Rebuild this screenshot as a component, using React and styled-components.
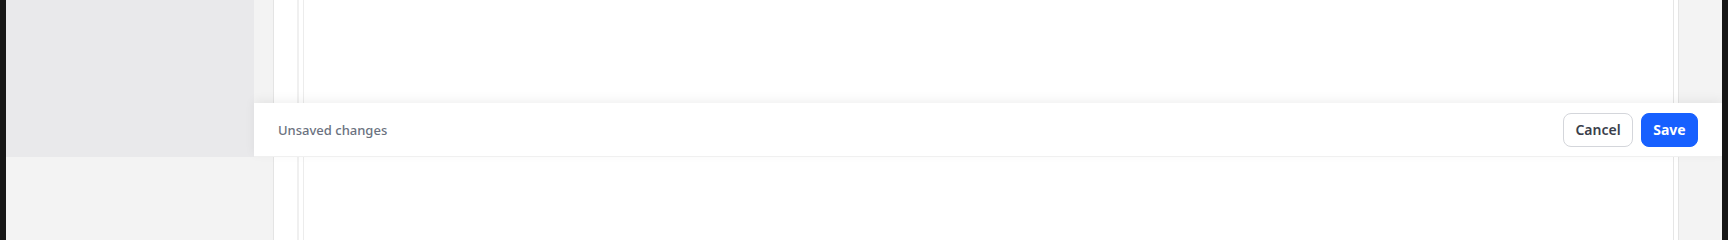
import styled, { createGlobalStyle } from "styled-components";

const GlobalStyle = createGlobalStyle`
  html, body {
    margin: 0;
    padding: 0;
    background: #161616;
    font-family: "Noto Sans", "Open Sans", "Liberation Sans", sans-serif;
  }
`;

const Frame = styled.div`
  display: flex;
  height: 240px;
  background: #161616;
`;

const Edge = styled.div`
  width: 6px;
  flex-shrink: 0;
`;

const Shell = styled.div`
  position: relative;
  flex: 1;
  display: flex;
  align-items: stretch;
  background: #f3f3f3;
  overflow: hidden;
`;

const Sidebar = styled.aside`
  width: 248px;
  height: 157px;
  flex-shrink: 0;
  background: #e9e9eb;
`;

const Main = styled.main`
  flex: 1;
  display: flex;
  padding: 0 43px 0 19px;
`;

const OuterPanel = styled.div`
  flex: 1;
  display: flex;
  background: #fff;
  border-left: 1px solid #e4e4e4;
  border-right: 1px solid #e4e4e4;
  padding: 0 4px 0 23px;
`;

const InnerPanel = styled.div`
  flex: 1;
  background: #fff;
  border-left: 2px solid #f0f0f0;
  border-right: 1px solid #e6e6e6;
  box-shadow: inset 4px 0 0 #fff, inset 5px 0 0 #ececec;
`;

const SaveBar = styled.div`
  position: absolute;
  left: 248px;
  right: 0;
  top: 103px;
  height: 54px;
  box-sizing: border-box;
  display: flex;
  align-items: center;
  justify-content: space-between;
  padding: 0 24px;
  background: #fff;
  border-bottom: 1px solid #f0f0f0;
  box-shadow: 0 -3px 10px rgba(0, 0, 0, 0.06);
`;

const Status = styled.span`
  font-size: 13px;
  font-weight: 500;
  color: #6b7280;
`;

const Actions = styled.div`
  display: flex;
  gap: 8px;
`;

const Button = styled.button`
  width: ${(p) => p.$width}px;
  height: 34px;
  box-sizing: border-box;
  padding: 0;
  border-radius: 8px;
  font-family: inherit;
  font-size: 14px;
  font-weight: ${(p) => (p.$primary ? 700 : 600)};
  cursor: pointer;
  border: 1px solid ${(p) => (p.$primary ? "#1760ff" : "#d4d6db")};
  background: ${(p) => (p.$primary ? "#1760ff" : "#fff")};
  color: ${(p) => (p.$primary ? "#fff" : "#3a3f4b")};
`;

export default function App() {
  return (
    <>
      <GlobalStyle />
      <Frame>
        <Edge />
        <Shell>
          <Sidebar />
          <Main>
            <OuterPanel>
              <InnerPanel />
            </OuterPanel>
          </Main>
          <SaveBar>
            <Status>Unsaved changes</Status>
            <Actions>
              <Button $width={70}>Cancel</Button>
              <Button $width={57} $primary>
                Save
              </Button>
            </Actions>
          </SaveBar>
        </Shell>
        <Edge />
      </Frame>
    </>
  );
}
